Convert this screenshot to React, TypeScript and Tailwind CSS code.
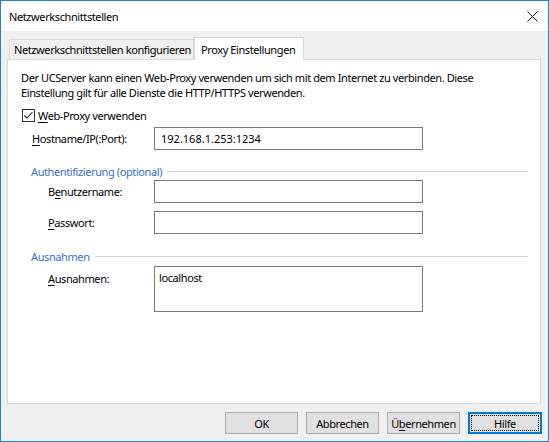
import React from 'react';

const font = 'font-["Noto_Sans",Arial,sans-serif]';

function Field({
  label,
  access,
  rest,
  value,
  labelClass,
  boxClass,
}: {
  label?: string;
  access: string;
  rest: string;
  value?: string;
  labelClass: string;
  boxClass: string;
}) {
  return (
    <div className="flex">
      <div className={labelClass}>
        {label}
        <span className="underline underline-offset-2">{access}</span>
        {rest}
      </div>
      <div className={boxClass}>{value}</div>
    </div>
  );
}

function Group({ title }: { title: string }) {
  return (
    <div className="flex h-[15px] items-center pl-[10px] pr-[12px]">
      <span className="text-[#3b6fd6]">{title}</span>
      <div className="ml-[5px] h-px flex-1 bg-[#ccd7e6]" />
    </div>
  );
}

function Btn({ children, focused }: { children: React.ReactNode; focused?: boolean }) {
  if (focused) {
    return (
      <div className="h-[22px] w-[74px] border-2 border-[#0078d7] bg-[#e1e1e1] p-px">
        <div className="flex h-full items-center justify-center border border-dotted border-black">
          {children}
        </div>
      </div>
    );
  }
  return (
    <div className="flex h-[22px] w-[73px] items-center justify-center border border-[#adadad] bg-[#e1e1e1]">
      {children}
    </div>
  );
}

export default function App() {
  return (
    <div
      className={`${font} flex h-[442px] w-[549px] flex-col whitespace-nowrap border border-[#1883d7] bg-[#f0f0f0] text-[11px] leading-[15px] tracking-[-0.4px] text-black`}
    >
      {/* Title bar */}
      <div className="flex h-[30px] items-center justify-between bg-white pl-[8px] pr-[9px]">
        <span>Netzwerkschnittstellen</span>
        <svg width="11" height="11" viewBox="0 0 11 11" className="mr-[1px]">
          <path d="M0.5 0.5 L10.5 10.5 M10.5 0.5 L0.5 10.5" stroke="#111" strokeWidth="1" />
        </svg>
      </div>

      <div className="px-[6px] pt-[6px]">
        {/* Tabs */}
        <div className="flex h-[22px] items-end pl-[2px]">
          <div className="flex h-[20px] w-[185px] items-center overflow-hidden border border-b-0 border-[#d9d9d9] bg-[#f0f0f0] pl-[4px]">
            Netzwerkschnittstellen konfigurieren
          </div>
          <div className="relative z-10 -mb-px flex h-[23px] w-[110px] items-center border border-b-0 border-[#d9d9d9] bg-white pl-[6px]">
            Proxy Einstellungen
          </div>
        </div>

        {/* Panel */}
        <div className="h-[345px] w-[534px] border border-[#d9d9d9] bg-white pl-[13px] pt-[10px]">
          <p>
            Der UCServer kann einen Web-Proxy verwenden um sich mit dem Internet zu verbinden. Diese
            <br />
            Einstellung gilt für alle Dienste die HTTP/HTTPS verwenden.
          </p>

          <div className="mt-[8px] flex h-[15px] items-center">
            <div className="ml-px flex h-[13px] w-[13px] items-center justify-center border border-[#333] bg-white">
              <svg width="11" height="11" viewBox="0 0 11 11">
                <path d="M1.5 5.5 L4 8 L9.5 2" fill="none" stroke="#222" strokeWidth="1.1" />
              </svg>
            </div>
            <span className="ml-[3px]">
              <span className="underline underline-offset-2">W</span>eb-Proxy verwenden
            </span>
          </div>

          <div className="mt-[4px]">
            <Field
              access="H"
              rest="ostname/IP(:Port):"
              value="192.168.1.253:1234"
              labelClass="ml-[11px] flex h-[23px] w-[122px] items-center"
              boxClass="flex h-[23px] w-[269px] items-center border border-[#7a7a7a] pl-[6px] tracking-[0px]"
            />
          </div>

          <div className="mt-[14px]">
            <Group title="Authentifizierung (optional)" />
          </div>

          <div className="mt-px">
            <Field
              label="B"
              access="e"
              rest="nutzername:"
              labelClass="ml-[27px] flex h-[23px] w-[106px] items-center"
              boxClass="h-[23px] w-[269px] border border-[#7a7a7a]"
            />
          </div>
          <div className="mt-[8px]">
            <Field
              access="P"
              rest="asswort:"
              labelClass="ml-[27px] flex h-[23px] w-[106px] items-center"
              boxClass="h-[23px] w-[269px] border border-[#7a7a7a]"
            />
          </div>

          <div className="mt-[15px]">
            <Group title="Ausnahmen" />
          </div>

          <div className="mt-[2px]">
            <Field
              access="A"
              rest="usnahmen:"
              value="localhost"
              labelClass="ml-[27px] w-[106px] pt-[5px]"
              boxClass="h-[46px] w-[269px] border border-[#7a7a7a] pl-[4px] pt-[3px]"
            />
          </div>
        </div>
      </div>

      {/* Buttons */}
      <div className="mt-[8px] flex justify-end gap-[8px] pr-[6px]">
        <Btn>OK</Btn>
        <Btn>Abbrechen</Btn>
        <Btn>
          Ü<span className="underline underline-offset-2">b</span>ernehmen
        </Btn>
        <Btn focused>Hilfe</Btn>
      </div>
    </div>
  );
}
